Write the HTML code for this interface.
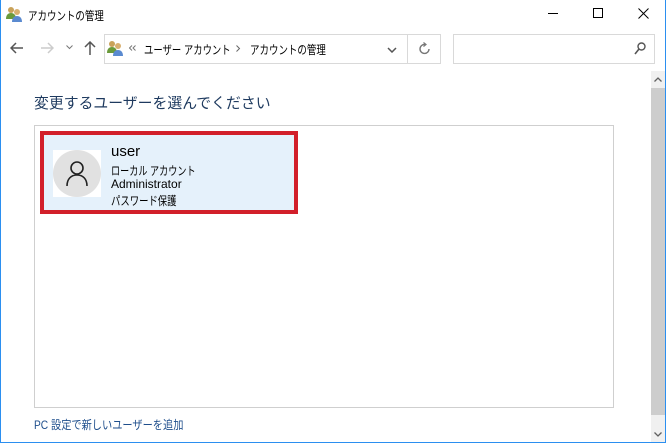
<!DOCTYPE html>
<html><head><meta charset="utf-8"><style>
*{margin:0;padding:0;box-sizing:border-box}
body{width:666px;height:443px;overflow:hidden;background:#fff;font-family:"Liberation Sans","Noto Sans CJK JP",sans-serif;position:relative;color:#000}
.abs{position:absolute}
.t{font-size:12px;white-space:nowrap;transform-origin:0 50%}
</style></head><body>
<div class="abs" style="left:0;top:0;width:666px;height:443px;border:1px solid #2b8ff0;border-top:none"></div>
<svg class="abs" style="left:6px;top:6px" width="18" height="16" viewBox="0 0 18 16">
<circle cx="5" cy="4" r="3" fill="#c9a25a"/><path d="M0 13c0-4 2-6 5-6s5 2 5 6z" fill="#6a9a3a"/>
<circle cx="11" cy="6" r="3" fill="#d8b070"/><path d="M6 16c0-4 2-6 5-6s5 2 5 6z" fill="#5a8ad0"/></svg>
<div class="abs t" style="left:28px;top:7px;transform:scaleX(0.79)">アカウントの管理</div>
<div class="abs" style="left:548px;top:13px;width:10px;height:1px;background:#000"></div>
<div class="abs" style="left:593px;top:8px;width:10px;height:10px;border:1px solid #000"></div>
<svg class="abs" style="left:638px;top:8px" width="11" height="11"><path d="M0.5 0.5L10.5 10.5M10.5 0.5L0.5 10.5" stroke="#000"/></svg>
<svg class="abs" style="left:10px;top:42px" width="14" height="12"><path d="M1 6H13M6 1L1 6L6 11" stroke="#555" stroke-width="1.5" fill="none"/></svg>
<svg class="abs" style="left:40px;top:42px" width="14" height="12"><path d="M1 6H13M8 1L13 6L8 11" stroke="#ccc" stroke-width="1.5" fill="none"/></svg>
<svg class="abs" style="left:66px;top:45px" width="7" height="5"><path d="M0.5 0.5L3.5 3.5L6.5 0.5" stroke="#777" fill="none"/></svg>
<svg class="abs" style="left:84px;top:41px" width="12" height="14"><path d="M6 14V1M1 6L6 1L11 6" stroke="#555" stroke-width="1.5" fill="none"/></svg>
<div class="abs" style="left:104px;top:34px;width:337px;height:30px;border:1px solid #d9d9d9"></div>
<div class="abs" style="left:407px;top:34px;width:1px;height:30px;background:#d9d9d9"></div>
<svg class="abs" style="left:107px;top:40px" width="18" height="16" viewBox="0 0 18 16">
<circle cx="5" cy="4" r="3" fill="#c9a25a"/><path d="M0 13c0-4 2-6 5-6s5 2 5 6z" fill="#6a9a3a"/>
<circle cx="11" cy="6" r="3" fill="#d8b070"/><path d="M6 16c0-4 2-6 5-6s5 2 5 6z" fill="#5a8ad0"/></svg>
<svg class="abs" style="left:129px;top:45px" width="7" height="6"><path d="M3 0.5L0.5 3L3 5.5M6.5 0.5L4 3L6.5 5.5" stroke="#777" fill="none"/></svg>
<div class="abs t" style="left:144px;top:41px;transform:scaleX(0.78)">ユーザー アカウント</div>
<svg class="abs" style="left:236px;top:45px" width="5" height="7"><path d="M0.5 0.5L3.5 3.5L0.5 6.5" stroke="#666" fill="none"/></svg>
<div class="abs t" style="left:250px;top:41px;transform:scaleX(0.79)">アカウントの管理</div>
<svg class="abs" style="left:387px;top:47px" width="10" height="6"><path d="M1 1L5 5L9 1" stroke="#555" stroke-width="1.5" fill="none"/></svg>
<svg class="abs" style="left:418px;top:42px" width="14" height="14"><path d="M11 7A4.5 4.5 0 1 1 7 2.5" stroke="#777" stroke-width="1.4" fill="none"/><path d="M5.5 0.5L8 2.5L5.5 4.5" stroke="#777" stroke-width="1.2" fill="none"/></svg>
<div class="abs" style="left:453px;top:34px;width:202px;height:30px;border:1px solid #d9d9d9"></div>
<svg class="abs" style="left:634px;top:42px" width="12" height="13"><circle cx="7.5" cy="4.5" r="3.5" stroke="#555" stroke-width="1.4" fill="none"/><path d="M5 7L1 12" stroke="#555" stroke-width="1.6"/></svg>
<div class="abs" style="left:651px;top:71px;width:14px;height:371px;background:#f0f0f0"></div>
<div class="abs" style="left:651px;top:88px;width:14px;height:327px;background:#cdcdcd"></div>
<svg class="abs" style="left:654px;top:77px" width="8" height="5"><path d="M0.5 4.5L4 1L7.5 4.5" stroke="#606060" stroke-width="1.3" fill="none"/></svg>
<svg class="abs" style="left:654px;top:432px" width="8" height="5"><path d="M0.5 0.5L4 4L7.5 0.5" stroke="#606060" stroke-width="1.3" fill="none"/></svg>
<div class="abs t" style="left:34px;top:92px;font-size:15px;color:#1e3a5f;transform:scaleX(0.99)">変更するユーザーを選んでください</div>
<div class="abs" style="left:34px;top:125px;width:580px;height:283px;border:1px solid #cfcfcf"></div>
<div class="abs" style="left:40px;top:131px;width:258px;height:83px;border:4px solid #d21f2a;background:#e5f1fb"></div>
<div class="abs" style="left:53px;top:150px;width:48px;height:47px;background:#fff"></div>
<div class="abs" style="left:53px;top:150px;width:48px;height:47px;border-radius:50%;background:#e1e1e1"></div>
<svg class="abs" style="left:65px;top:160px" width="24" height="27"><circle cx="12" cy="8" r="6" stroke="#222" stroke-width="1.6" fill="none"/><path d="M2 26C2 19 6 15 12 15S22 19 22 26" stroke="#222" stroke-width="1.6" fill="none"/></svg>
<div class="abs t" style="left:111px;top:143px;font-size:15px">user</div>
<div class="abs t" style="left:111px;top:162px;transform:scaleX(0.76)">ローカル アカウント</div>
<div class="abs t" style="left:111px;top:177px">Administrator</div>
<div class="abs t" style="left:111px;top:192px;transform:scaleX(0.78)">パスワード保護</div>
<div class="abs t" style="left:34px;top:416px;color:#1e4e8c;transform:scaleX(0.85)">PC 設定で新しいユーザーを追加</div>
</body></html>
